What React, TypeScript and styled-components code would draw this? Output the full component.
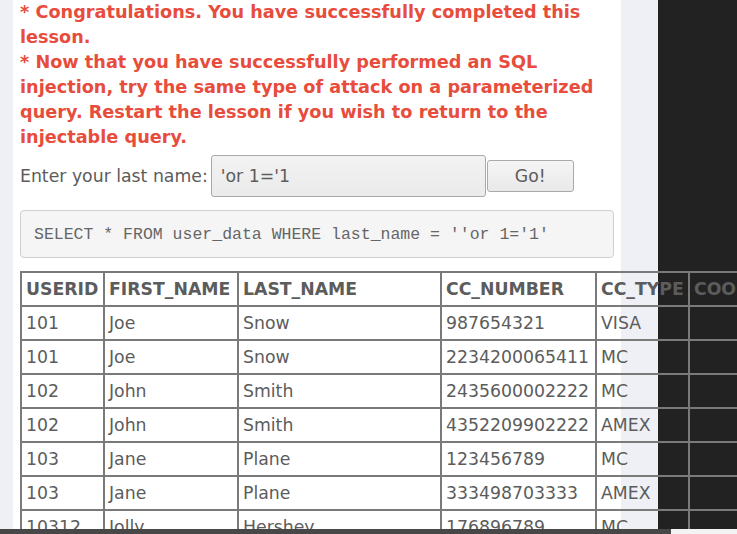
import styled, { createGlobalStyle } from "styled-components";

const GlobalStyle = createGlobalStyle`
  body {
    margin: 0;
    font-family: "DejaVu Sans", Verdana, sans-serif;
  }
`;

const TEXT_GRAY = "#5c5c5c";
const GUTTER = "#eef0f6";
const BASE_SIZE = 17.3;

const Page = styled.div`
  width: 737px;
  height: 534px;
  display: flex;
  flex-direction: column;
  overflow: hidden;
`;

const Main = styled.div`
  flex: 1;
  min-height: 0;
  display: flex;
  overflow: hidden;
`;

const Gutter = styled.div<{ $width: number }>`
  width: ${(p) => p.$width}px;
  flex-shrink: 0;
  background: ${GUTTER};
`;

const DarkPane = styled.div`
  flex: 1;
  background: #222;
`;

const Panel = styled.div`
  width: 608px;
  flex-shrink: 0;
  box-sizing: border-box;
  padding: 0 7px;
  background: #fff;
`;

const Message = styled.p`
  margin: 0;
  color: #e74c3c;
  font-size: 17.7px;
  font-weight: bold;
  line-height: 25px;
`;

const FormRow = styled.div`
  margin-top: 5px;
  display: flex;
  align-items: center;
  color: ${TEXT_GRAY};
  font-size: ${BASE_SIZE}px;
`;

const Label = styled.label`
  margin-right: 3px;
  white-space: nowrap;
`;

const TextInput = styled.input`
  width: 275px;
  height: 42px;
  box-sizing: border-box;
  padding: 0 9px;
  border: 1px solid #a9a9a9;
  border-radius: 3px;
  background: linear-gradient(#f2f2f2, #ebebeb);
  color: ${TEXT_GRAY};
  font: ${BASE_SIZE}px "DejaVu Sans", sans-serif;
  outline: none;
`;

const GoButton = styled.button`
  margin-left: 1px;
  width: 87px;
  height: 32px;
  border: 1px solid #aaa;
  border-radius: 3px;
  background: linear-gradient(#f5f5f5, #e9e9e9);
  color: ${TEXT_GRAY};
  font: ${BASE_SIZE}px "DejaVu Sans", sans-serif;
`;

const SqlBox = styled.pre`
  margin: 13px 0 0;
  height: 48px;
  box-sizing: border-box;
  padding: 0 13px;
  display: flex;
  align-items: center;
  border: 1px solid #cfcfcf;
  border-radius: 4px;
  background: #f5f5f5;
  color: #666;
  font: 16.5px "Liberation Mono", "Courier New", monospace;
`;

const DataTable = styled.table`
  position: relative;
  z-index: 1;
  margin-top: 13px;
  border-collapse: collapse;
  table-layout: fixed;
  width: 900px;
  color: ${TEXT_GRAY};
  font-size: ${BASE_SIZE}px;
  line-height: 24px;
`;

const HeadCell = styled.th`
  border: 2px solid #7a7a7a;
  padding: 4px 4px;
  text-align: left;
  font-weight: bold;
  white-space: nowrap;
  overflow: hidden;
`;

const Cell = styled.td`
  border: 2px solid #7a7a7a;
  padding: 4px 4px;
  white-space: nowrap;
  overflow: hidden;
`;

const ScrollBar = styled.div`
  height: 5px;
  flex-shrink: 0;
  display: flex;
  background: #f3f3f3;
`;

const ScrollThumb = styled.div`
  width: 671px;
  background: #474747;
`;

const columns = [
  { name: "USERID", width: 83 },
  { name: "FIRST_NAME", width: 134 },
  { name: "LAST_NAME", width: 203 },
  { name: "CC_NUMBER", width: 155 },
  { name: "CC_TYPE", width: 93 },
  { name: "COOKIE", width: 110 },
  { name: "LOGIN_COUNT", width: 122 },
];

const rows = [
  ["101", "Joe", "Snow", "987654321", "VISA", "", "0"],
  ["101", "Joe", "Snow", "2234200065411", "MC", "", "0"],
  ["102", "John", "Smith", "2435600002222", "MC", "", "0"],
  ["102", "John", "Smith", "4352209902222", "AMEX", "", "0"],
  ["103", "Jane", "Plane", "123456789", "MC", "", "0"],
  ["103", "Jane", "Plane", "333498703333", "AMEX", "", "0"],
  ["10312", "Jolly", "Hershey", "176896789", "MC", "", "0"],
  ["10312", "Jolly", "Hershey", "333300003333", "AMEX", "", "0"],
];

export default function App() {
  return (
    <>
      <GlobalStyle />
      <Page>
        <Main>
          <Gutter $width={13} />
          <Panel>
            <Message>
              * Congratulations. You have successfully completed this lesson.
            </Message>
            <Message>
              * Now that you have successfully performed an SQL injection, try
              the same type of attack on a parameterized query. Restart the
              lesson if you wish to return to the injectable query.
            </Message>
            <FormRow>
              <Label>Enter your last name:</Label>
              <TextInput defaultValue="'or 1='1" />
              <GoButton>Go!</GoButton>
            </FormRow>
            <SqlBox>SELECT * FROM user_data WHERE last_name = ''or 1='1'</SqlBox>
            <DataTable>
              <colgroup>
                {columns.map((c) => (
                  <col key={c.name} style={{ width: c.width }} />
                ))}
              </colgroup>
              <thead>
                <tr>
                  {columns.map((c) => (
                    <HeadCell key={c.name}>{c.name}</HeadCell>
                  ))}
                </tr>
              </thead>
              <tbody>
                {rows.map((r, i) => (
                  <tr key={i}>
                    {r.map((v, j) => (
                      <Cell key={j}>{v}</Cell>
                    ))}
                  </tr>
                ))}
              </tbody>
            </DataTable>
          </Panel>
          <Gutter $width={37} />
          <DarkPane />
        </Main>
        <ScrollBar>
          <ScrollThumb />
        </ScrollBar>
      </Page>
    </>
  );
}
